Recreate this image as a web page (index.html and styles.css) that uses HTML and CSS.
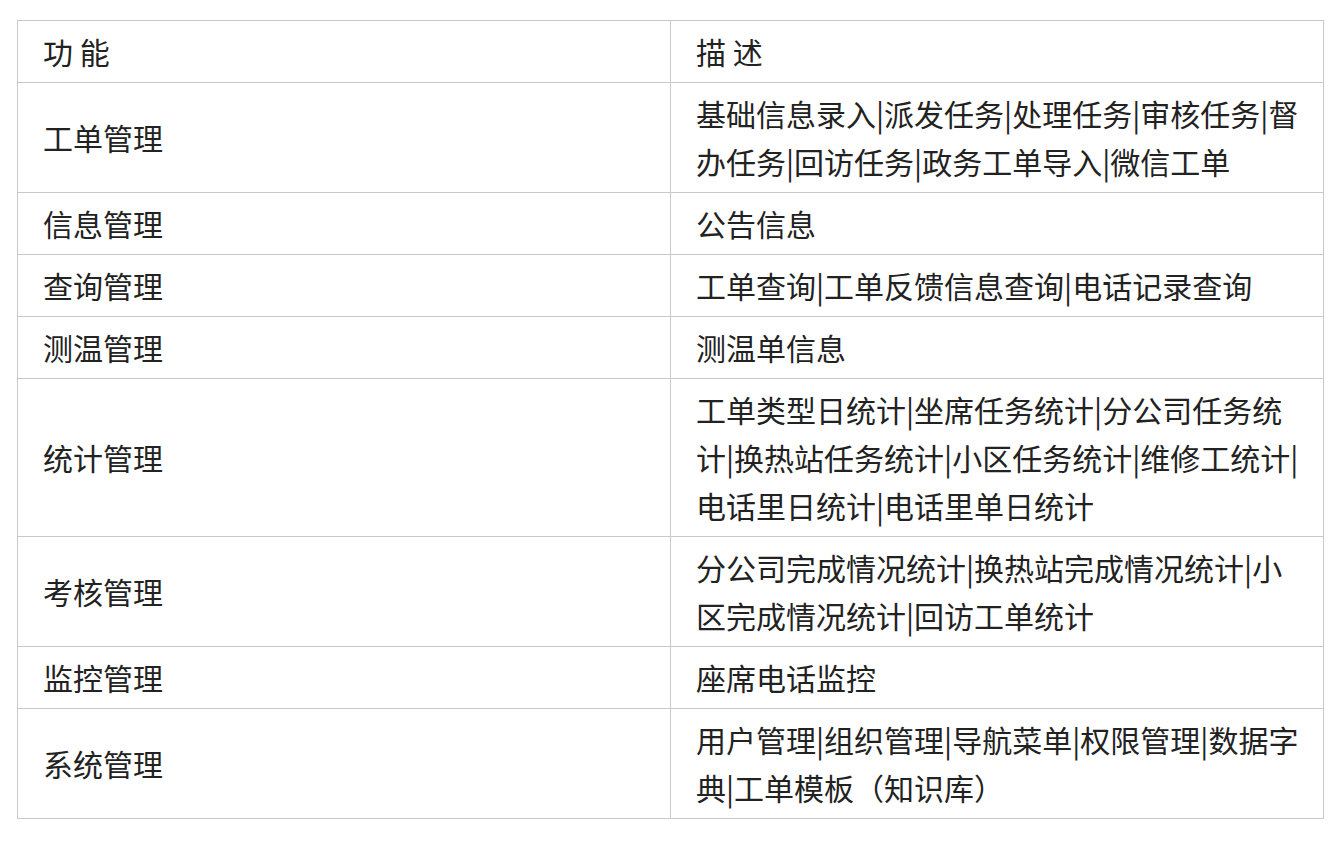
FILE: index.html
```html
<!DOCTYPE html>
<html lang="zh-CN">
<head>
<meta charset="utf-8">
<title>功能描述</title>
<link rel="stylesheet" href="styles.css">
</head>
<body>
<div class="page">
  <table class="feature-table">
    <colgroup><col class="col-a"><col class="col-b"></colgroup>
    <thead>
      <tr><th>功 能</th><th>描 述</th></tr>
    </thead>
    <tbody>
      <tr><td>工单管理</td><td>基础信息录入|派发任务|处理任务|审核任务|督办任务|回访任务|政务工单导入|微信工单</td></tr>
      <tr><td>信息管理</td><td>公告信息</td></tr>
      <tr><td>查询管理</td><td>工单查询|工单反馈信息查询|电话记录查询</td></tr>
      <tr><td>测温管理</td><td>测温单信息</td></tr>
      <tr><td>统计管理</td><td>工单类型日统计|坐席任务统计|分公司任务统计|换热站任务统计|小区任务统计|维修工统计|电话里日统计|电话里单日统计</td></tr>
      <tr><td>考核管理</td><td>分公司完成情况统计|换热站完成情况统计|小区完成情况统计|回访工单统计</td></tr>
      <tr><td>监控管理</td><td>座席电话监控</td></tr>
      <tr><td>系统管理</td><td>用户管理|组织管理|导航菜单|权限管理|数据字典|工单模板（知识库）</td></tr>
    </tbody>
  </table>
</div>
</body>
</html>
```
FILE: styles.css
```css
html, body {
  margin: 0;
  padding: 0;
  background: #ffffff;
}
.page {
  padding: 20px 20px 0 17px;
}
.feature-table {
  width: 100%;
  border-collapse: collapse;
  table-layout: fixed;
  font-family: "Noto Sans CJK SC", "Noto Sans", sans-serif;
  font-size: 30px;
  line-height: 48px;
  color: #222222;
}
.col-a, .col-b {
  width: 50%;
}
.feature-table th,
.feature-table td {
  border: 1px solid #c8c9cc;
  padding: 6px 16px 7px 25px;
  text-align: left;
  vertical-align: middle;
  font-weight: 400;
  word-break: break-all;
}
```
